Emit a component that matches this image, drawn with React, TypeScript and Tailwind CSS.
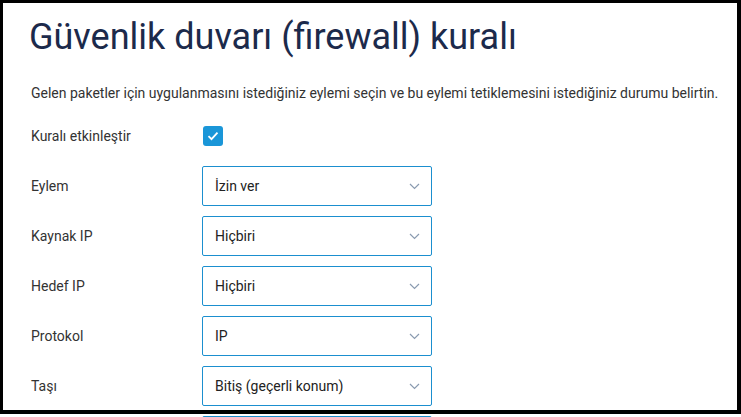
import React from 'react';

const rows = [
  { label: 'Eylem', value: 'İzin ver' },
  { label: 'Kaynak IP', value: 'Hiçbiri' },
  { label: 'Hedef IP', value: 'Hiçbiri' },
  { label: 'Protokol', value: 'IP' },
  { label: 'Taşı', value: 'Bitiş (geçerli konum)' },
  { label: '', value: '' },
];

const Chevron: React.FC = () => (
  <svg width="11" height="7" viewBox="0 0 11 7" fill="none">
    <path d="M1 1l4.5 4.5L10 1" stroke="#8a9bb0" strokeWidth="1.2" />
  </svg>
);

const App: React.FC = () => {
  return (
    <div className="relative w-[741px] h-[417px] overflow-hidden bg-white font-['Roboto',sans-serif] text-[#333]">
      <div className="pl-[29px] pr-[20px]">
        <h1 className="pt-[13px] text-[36px] leading-[48px] text-[#1c2a4b]">
          Güvenlik duvarı (firewall) kuralı
        </h1>
        <p className="mt-[21px] text-[14px] leading-[22px] pl-[2px] text-[#333]">
          Gelen paketler için uygulanmasını istediğiniz eylemi seçin ve bu eylemi tetiklemesini istediğiniz durumu belirtin.
        </p>

        <div className="mt-[12px] pl-[2px]">
          {/* Checkbox row */}
          <div className="flex items-center h-[40px] mb-[10px]">
            <span className="w-[172px] text-[14px]">Kuralı etkinleştir</span>
            <span className="flex items-center justify-center w-[20px] h-[20px] rounded-[3px] bg-[#1a96d8]">
              <svg width="12" height="10" viewBox="0 0 12 10" fill="none">
                <path d="M1.5 5.2l3 3 6-6.5" stroke="#fff" strokeWidth="1.8" />
              </svg>
            </span>
          </div>

          {rows.map((row, i) => (
            <div key={i} className="flex items-center h-[40px] mb-[10px]">
              <span className="w-[171px] text-[14px]">{row.label}</span>
              <div className="flex items-center justify-between w-[230px] h-[40px] border border-[#1b8fcf] rounded-[2px] pl-[12px] pr-[11px]">
                <span className="text-[14px] text-[#222]">{row.value}</span>
                <Chevron />
              </div>
            </div>
          ))}
        </div>
      </div>

      {/* screenshot frame overlay */}
      <div className="absolute top-0 left-0 w-[741px] h-[414px] border-l-[3px] border-t-[3px] border-r-[4px] border-b-[4px] border-black pointer-events-none" />
    </div>
  );
};

export default App;
